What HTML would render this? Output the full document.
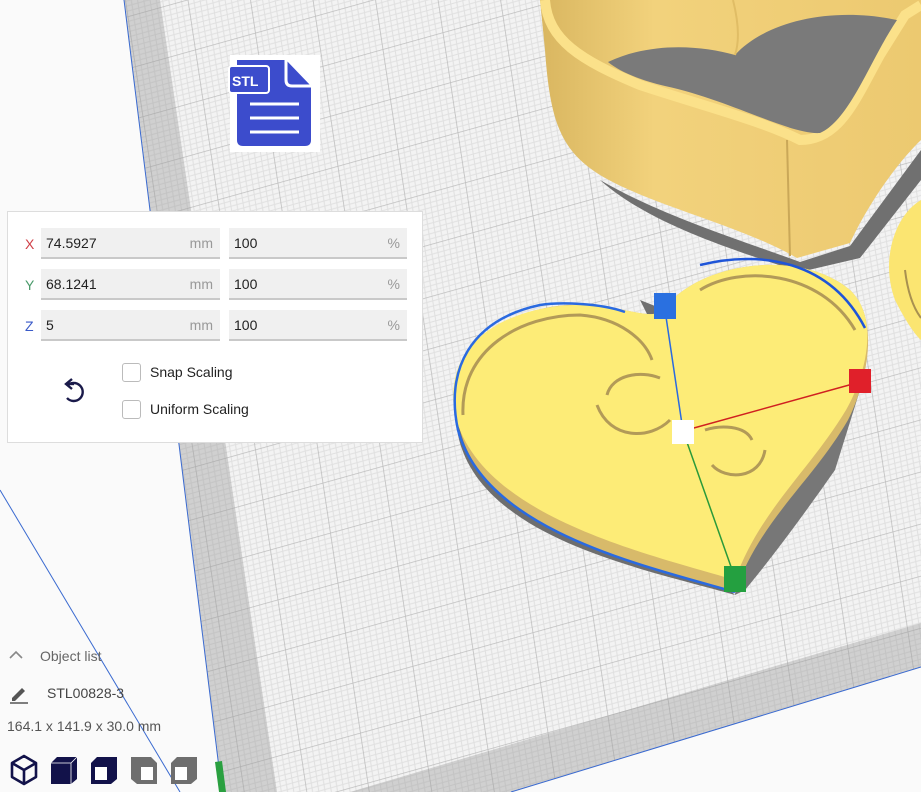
<!DOCTYPE html>
<html><head><meta charset="utf-8"><style>
body{margin:0;width:921px;height:792px;overflow:hidden;background:#fafafa;font-family:"Liberation Sans","DejaVu Sans",sans-serif;position:relative}
svg.bg{position:absolute;left:0;top:0}
.panel{position:absolute;left:7px;top:211px;width:416px;height:232px;background:#fff;border:1px solid #ddd;box-sizing:border-box}
.lab{position:absolute;font-size:14px;left:17px}
.f{position:absolute;height:31px;background:#f0f0f0;border-bottom:2px solid #c9c9c9;box-sizing:border-box;font-size:14px;color:#222;line-height:30px;padding-left:5px}
.u{position:absolute;right:7px;top:0;color:#999}
.cb{position:absolute;left:114px;width:19px;height:19px;border:1px solid #bbb;border-radius:3px;box-sizing:border-box}
.ct{position:absolute;left:142px;font-size:14px;color:#222}
.t{position:absolute;font-size:14px}
</style></head><body>
<svg class="bg" width="921" height="792">
<defs>
<pattern id="g" width="60" height="50" patternUnits="userSpaceOnUse" patternTransform="matrix(1,-0.28,0.15,1,0,0)">
<rect width="60" height="50" fill="#f3f3f3"/>
<path d="M6 0V50M12 0V50M18 0V50M24 0V50M30 0V50M36 0V50M42 0V50M48 0V50M54 0V50M0 5H60M0 10H60M0 15H60M0 20H60M0 25H60M0 30H60M0 35H60M0 40H60M0 45H60" stroke="#e0e0e0" stroke-width="1"/>
<path d="M0 0V50M0 0H60" stroke="#bdbdbd" stroke-width="1.5"/>
</pattern>
<linearGradient id="w" x1="0" y1="0" x2="1" y2="0"><stop offset="0" stop-color="#d9b660"/><stop offset="0.3" stop-color="#f2d27c"/><stop offset="1" stop-color="#ecc970"/></linearGradient>
</defs>
<polygon points="124,0 921,0 921,667 511,792 222,792" fill="url(#g)"/>
<polygon points="124,0 160,0 277,792 222,792" fill="#9a9a9a" opacity="0.4"/>
<polygon points="350,792 921,623 921,667 511,792" fill="#9a9a9a" opacity="0.4"/>
<line x1="124" y1="0" x2="222" y2="792" stroke="#3a6ad0" stroke-width="1"/>
<line x1="0" y1="490" x2="180" y2="792" stroke="#3a6ad0" stroke-width="1"/>
<line x1="511" y1="792" x2="921" y2="667" stroke="#3a6ad0" stroke-width="1"/>
<polygon points="215,762 222,761 226,792 219,792" fill="#2aa040"/>
<!-- cutter -->
<path d="M600 180 C660 215 740 240 800 262 L850 246 L921 150 L921 180 L860 258 L800 272 C740 252 650 225 600 180Z" fill="#707070"/>
<path d="M540 0 L545 50 C550 120 560 150 600 175 C650 205 740 225 797 258 L850 243 C870 200 900 160 921 140 L921 0 Z" fill="url(#w)"/>
<path d="M787 140 L790 256" stroke="#caa858" stroke-width="2"/>
<path d="M545 0 C548 40 580 60 640 85 C700 105 760 120 800 140 C840 140 855 100 880 55 L905 15 L921 5" fill="none" stroke="#fbe18a" stroke-width="10"/>
<path d="M608 62 C650 42 700 45 735 55 C765 22 830 6 897 20 C870 60 850 120 820 133 C790 135 730 100 665 86 C640 80 620 72 608 62Z" fill="#7a7a7a"/>
<path d="M733 0 C738 20 740 40 735 55" stroke="#e0bd65" stroke-width="2" fill="none"/>
<!-- right partial -->
<path d="M921 200 C895 215 880 260 895 300 C905 320 915 335 921 340 Z" fill="#fbe571"/>
<path d="M905 270 C908 295 915 310 921 318" stroke="#a89050" stroke-width="2" fill="none"/>
<!-- heart shadow/side -->
<path d="M640 300 L665 310 L655 330 Z" fill="#6f6f6f"/>
<path d="M735 595 C650 570 480 540 458 435 L455 410 C470 500 620 535 700 560 Z" fill="#6e6e6e"/>
<path d="M735 595 C740 540 770 510 810 470 L860 390 L835 470 C800 520 770 560 745 590Z" fill="#777"/>
<path d="M735 592 C640 565 485 530 460 430 C440 340 520 300 590 305 C630 308 655 322 665 308 C700 262 800 248 850 290 C880 318 868 380 848 420 C812 482 760 520 735 592 Z" fill="#d8ba6a"/>
<path d="M735 580 C640 552 480 515 455 415 C440 335 520 302 590 305 C630 308 655 322 665 308 C700 262 800 248 850 290 C880 318 866 375 846 410 C810 470 760 510 735 580 Z" fill="#fdec77"/>
<path d="M735 592 C640 565 485 530 458 430 C445 370 470 320 540 305 C560 302 600 303 625 312" fill="none" stroke="#2a6ae0" stroke-width="2.5"/>
<path d="M700 265 C760 250 830 260 865 328" fill="none" stroke="#1f55d8" stroke-width="2.5"/>
<path d="M463 415 C460 350 520 315 580 315 C620 318 645 340 652 360" fill="none" stroke="#b29a58" stroke-width="3"/>
<path d="M700 290 C740 265 820 270 855 330" fill="none" stroke="#b29a58" stroke-width="3"/>
<path d="M607 395 C612 375 640 370 660 378 M597 405 C610 440 650 440 670 420" fill="none" stroke="#b29a58" stroke-width="3"/>
<path d="M705 430 C720 425 745 425 752 440 M712 465 C725 480 760 480 765 450" fill="none" stroke="#b29a58" stroke-width="3"/>
<!-- gizmo -->
<line x1="665" y1="310" x2="683" y2="431" stroke="#2a6ae0" stroke-width="1.5"/>
<line x1="683" y1="431" x2="860" y2="382" stroke="#d02020" stroke-width="1.5"/>
<line x1="683" y1="431" x2="735" y2="578" stroke="#2a9a3a" stroke-width="1.5"/>
<rect x="654" y="293" width="22" height="26" fill="#2a70e0"/>
<rect x="849" y="369" width="22" height="24" fill="#e0202a"/>
<rect x="672" y="420" width="22" height="24" fill="#fff"/>
<rect x="724" y="566" width="22" height="26" fill="#24a040"/>
<!-- stl icon -->
<rect x="230" y="55" width="90" height="97" fill="#fff"/>
<path d="M237 60 L286 60 L311 86 L311 140 Q311 146 305 146 L243 146 Q237 146 237 140 Z" fill="#3c4ccc"/>
<path d="M286 60 L286 80 Q286 86 292 86 L311 86" fill="none" stroke="#fff" stroke-width="3"/>
<rect x="229" y="66" width="40" height="27" rx="3" fill="#3c4ccc" stroke="#fff" stroke-width="2"/>
<text x="232" y="86" font-family="Liberation Sans" font-weight="bold" font-size="14" fill="#fff">STL</text>
<path d="M250 104H299M250 118H299M250 132H299" stroke="#fff" stroke-width="3"/>
</svg>
<div class="panel">
<div class="lab" style="top:24px;color:#d04048">X</div>
<div class="lab" style="top:65px;color:#4a9a6a">Y</div>
<div class="lab" style="top:106px;color:#3a5ac8">Z</div>
<div class="f" style="left:33px;top:16px;width:179px">74.5927<span class="u">mm</span></div>
<div class="f" style="left:221px;top:16px;width:178px">100<span class="u">%</span></div>
<div class="f" style="left:33px;top:57px;width:179px">68.1241<span class="u">mm</span></div>
<div class="f" style="left:221px;top:57px;width:178px">100<span class="u">%</span></div>
<div class="f" style="left:33px;top:98px;width:179px">5<span class="u">mm</span></div>
<div class="f" style="left:221px;top:98px;width:178px">100<span class="u">%</span></div>
<div class="cb" style="top:151px"></div><div class="ct" style="top:152px">Snap Scaling</div>
<div class="cb" style="top:188px"></div><div class="ct" style="top:189px">Uniform Scaling</div>
<svg style="position:absolute;left:50px;top:163px" width="30" height="30"><path d="M9 11 A9 9 0 1 1 9 23" fill="none" stroke="#1a1a4a" stroke-width="2.4"/><path d="M14 4 L8 9 L14 14" fill="none" stroke="#1a1a4a" stroke-width="2.4"/><path d="M8 9 H16" stroke="#1a1a4a" stroke-width="2.4"/></svg>
</div>
<svg style="position:absolute;left:8px;top:649px" width="16" height="12"><path d="M2 9 L8 3 L14 9" fill="none" stroke="#888" stroke-width="1.6"/></svg>
<div class="t" style="left:40px;top:648px;color:#666">Object list</div>
<svg style="position:absolute;left:8px;top:684px" width="22" height="20"><path d="M4 14 L14 4 L17 7 L7 17 L4 17Z" fill="#555"/><path d="M2 19H20" stroke="#555" stroke-width="1.5"/></svg>
<div class="t" style="left:47px;top:685px;color:#444">STL00828-3</div>
<div class="t" style="left:7px;top:718px;color:#555">164.1 x 141.9 x 30.0 mm</div>
<svg style="position:absolute;left:0;top:750px" width="210" height="40">
<g fill="none" stroke="#12124a" stroke-width="2.6" stroke-linejoin="round">
<path d="M24 6 L36 13 L36 27 L24 34 L12 27 L12 13 Z M12 13 L24 20 L36 13 M24 20 V34"/>
</g>
<path d="M57 7 L77 7 L77 29 L71 34 L51 34 L51 13 Z" fill="#12124a"/>
<path d="M51 13 H71 V34 M71 13 L77 7" fill="none" stroke="#fff" stroke-width="0.8"/>
<path d="M97 7 L117 7 L117 29 L111 34 L91 34 L91 13 Z" fill="#12124a"/>
<path d="M95 17 H107 V30 H95 Z" fill="#fff"/>
<path d="M131 7 L151 7 L157 13 L157 34 L137 34 L131 29 Z" fill="#6e6e6e"/>
<path d="M141 17 H153 V30 H141 Z" fill="#fff"/>
<path d="M177 7 L197 7 L197 29 L191 34 L171 34 L171 13 Z" fill="#6e6e6e"/>
<path d="M175 17 H187 V30 H175 Z" fill="#fff"/>
</svg>
</body></html>
